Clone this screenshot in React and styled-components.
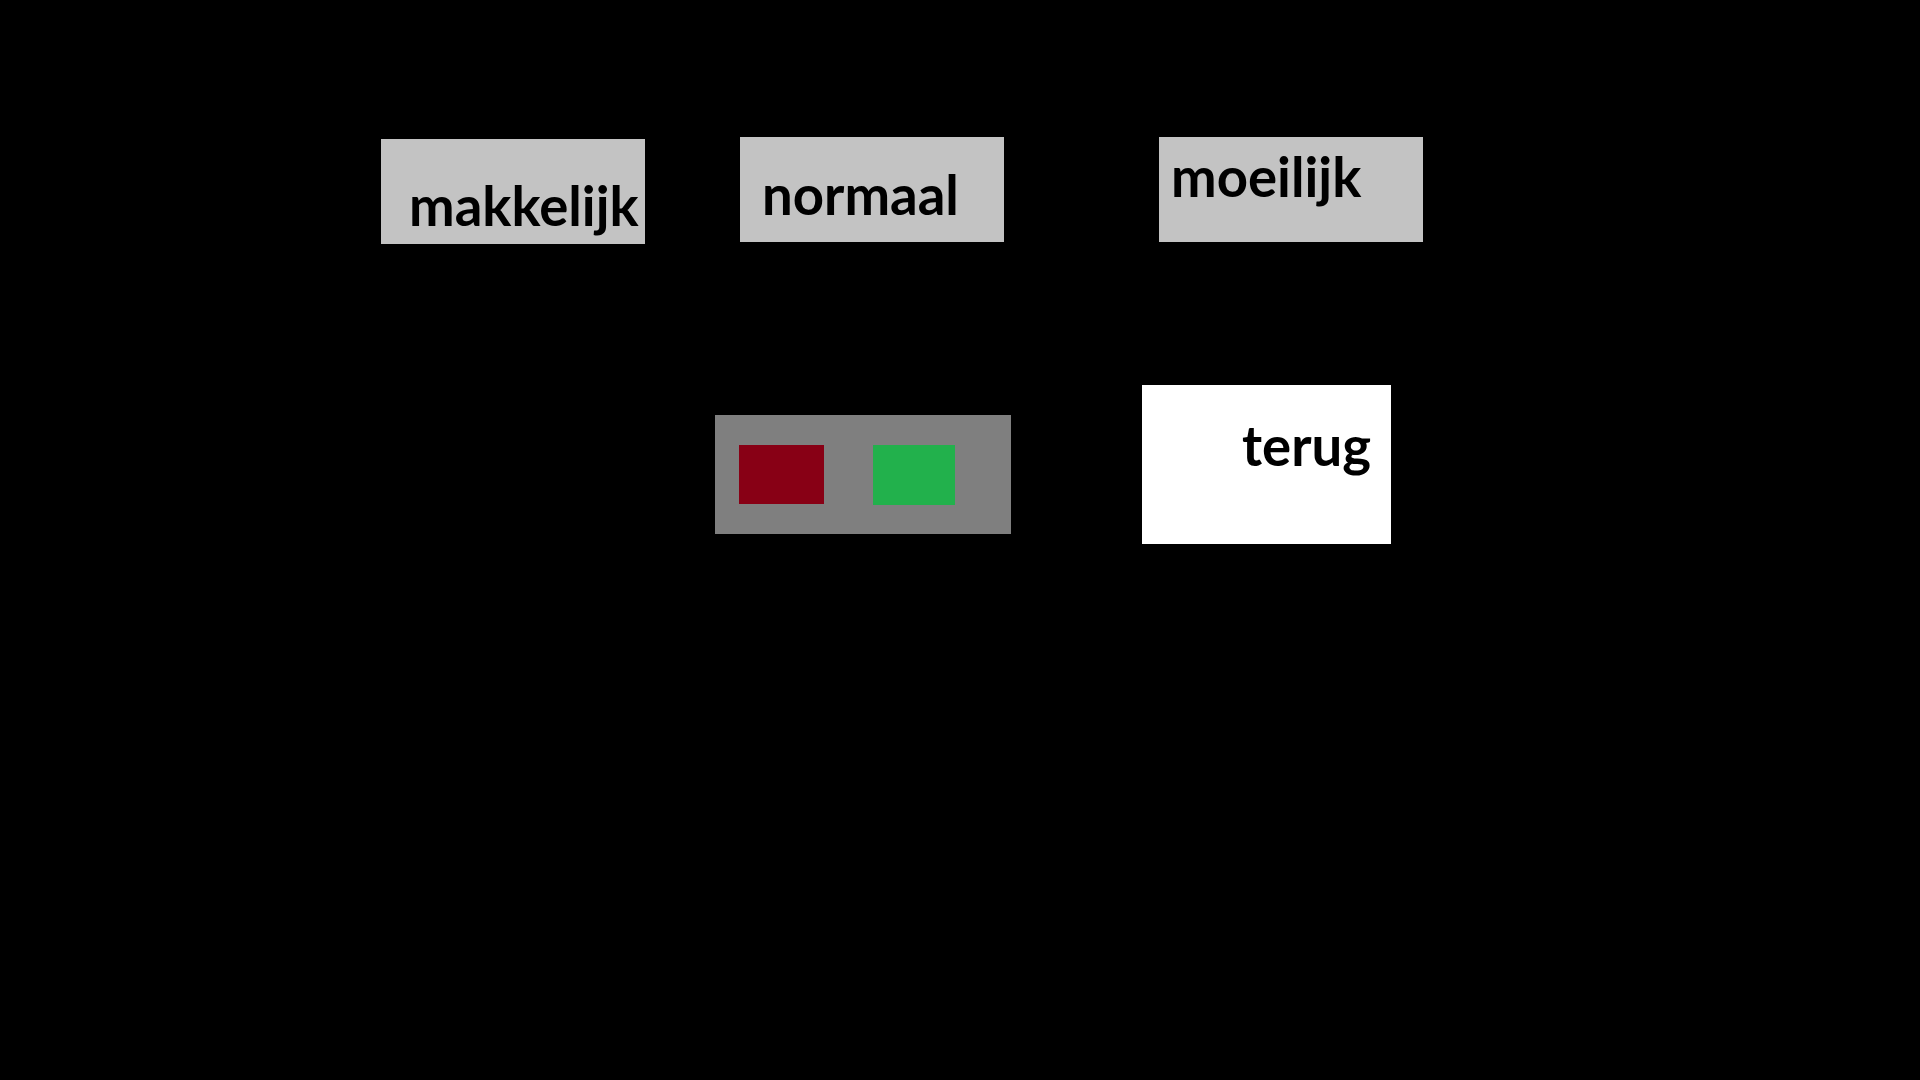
import React from "react";
import styled, { createGlobalStyle } from "styled-components";

const GlobalStyle = createGlobalStyle`
  html, body {
    margin: 0;
    padding: 0;
    background: #000000;
  }
  body {
    font-family: "Lato", "Liberation Sans", sans-serif;
  }
`;

const levels = [
  { label: "makkelijk", offset: 0, top: 2, padTop: 39, padLeft: 28 },
  { label: "normaal", offset: 95, top: 0, padTop: 30, padLeft: 22 },
  { label: "moeilijk", offset: 155, top: 0, padTop: 12, padLeft: 12 },
];

const App = () => {
  const levelButtons = levels.map((level) => (
    <LevelButton
      key={level.label}
      $offset={level.offset}
      $top={level.top}
      $padTop={level.padTop}
      $padLeft={level.padLeft}
    >
      {level.label}
    </LevelButton>
  ));

  return (
    <>
      <GlobalStyle />
      <Screen>
        <LevelRow>{levelButtons}</LevelRow>
        <BottomRow>
          <ColorPanel>
            <Swatch $color="#880015" $w={85} $h={59} />
            <Swatch $color="#22b14c" $w={82} $h={60} />
          </ColorPanel>
          <BackButton>terug</BackButton>
        </BottomRow>
      </Screen>
    </>
  );
};

const Screen = styled.div`
  width: 1920px;
  height: 1080px;
  background: #000000;
  display: flex;
  flex-direction: column;
  overflow: hidden;
`;

const LevelRow = styled.div`
  display: flex;
  align-items: flex-start;
  padding: 137px 0 0 381px;
`;

const LevelButton = styled.div`
  box-sizing: border-box;
  width: 264px;
  height: 105px;
  margin-left: ${(p) => p.$offset}px;
  margin-top: ${(p) => p.$top}px;
  padding: ${(p) => p.$padTop}px 0 0 ${(p) => p.$padLeft}px;
  background: #c3c3c3;
  color: #000000;
  font-size: 54.5px;
  font-weight: 700;
  line-height: 1;
  white-space: nowrap;
`;

const BottomRow = styled.div`
  display: flex;
  align-items: flex-start;
  margin-top: 141px;
  padding-left: 715px;
`;

const ColorPanel = styled.div`
  box-sizing: border-box;
  width: 296px;
  height: 119px;
  margin-top: 30px;
  padding: 30px 0 0 24px;
  display: flex;
  align-items: flex-start;
  gap: 49px;
  background: #7f7f7f;
`;

const Swatch = styled.div`
  width: ${(p) => p.$w}px;
  height: ${(p) => p.$h}px;
  background: ${(p) => p.$color};
`;

const BackButton = styled.div`
  box-sizing: border-box;
  width: 249px;
  height: 159px;
  margin-left: 131px;
  padding: 33px 0 0 100px;
  background: #ffffff;
  color: #000000;
  font-size: 54.5px;
  font-weight: 700;
  line-height: 1;
`;

export default App;
